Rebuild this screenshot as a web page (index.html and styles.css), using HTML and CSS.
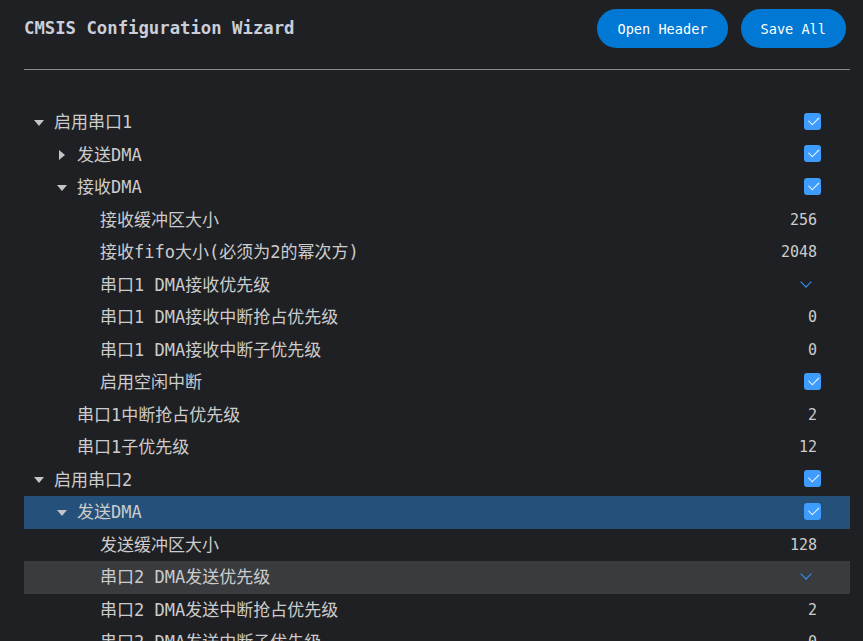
FILE: index.html
```html
<!DOCTYPE html>
<html lang="zh-CN">
<head>
<meta charset="utf-8">
<title>CMSIS Configuration Wizard</title>
<link rel="stylesheet" href="styles.css">
</head>
<body>
<div class="page">
  <header class="header">
    <h1 class="title">CMSIS Configuration Wizard</h1>
    <div class="actions">
      <button class="btn">Open Header</button>
      <button class="btn">Save All</button>
    </div>
  </header>

  <div class="tree">
    <div class="row l0"><span class="twistie open"></span><span class="label">启用串口1</span><span class="ctl"><span class="check"></span></span></div>
    <div class="row l1"><span class="twistie closed"></span><span class="label">发送DMA</span><span class="ctl"><span class="check"></span></span></div>
    <div class="row l1"><span class="twistie open"></span><span class="label">接收DMA</span><span class="ctl"><span class="check"></span></span></div>
    <div class="row l2"><span class="twistie"></span><span class="label">接收缓冲区大小</span><span class="ctl"><span class="val">256</span></span></div>
    <div class="row l2"><span class="twistie"></span><span class="label">接收fifo大小(必须为2的幂次方)</span><span class="ctl"><span class="val">2048</span></span></div>
    <div class="row l2"><span class="twistie"></span><span class="label">串口1 DMA接收优先级</span><span class="ctl"><span class="chev"></span></span></div>
    <div class="row l2"><span class="twistie"></span><span class="label">串口1 DMA接收中断抢占优先级</span><span class="ctl"><span class="val">0</span></span></div>
    <div class="row l2"><span class="twistie"></span><span class="label">串口1 DMA接收中断子优先级</span><span class="ctl"><span class="val">0</span></span></div>
    <div class="row l2"><span class="twistie"></span><span class="label">启用空闲中断</span><span class="ctl"><span class="check"></span></span></div>
    <div class="row l1"><span class="twistie"></span><span class="label">串口1中断抢占优先级</span><span class="ctl"><span class="val">2</span></span></div>
    <div class="row l1"><span class="twistie"></span><span class="label">串口1子优先级</span><span class="ctl"><span class="val">12</span></span></div>
    <div class="row l0"><span class="twistie open"></span><span class="label">启用串口2</span><span class="ctl"><span class="check"></span></span></div>
    <div class="row l1 selected"><span class="twistie open"></span><span class="label">发送DMA</span><span class="ctl"><span class="check"></span></span></div>
    <div class="row l2"><span class="twistie"></span><span class="label">发送缓冲区大小</span><span class="ctl"><span class="val">128</span></span></div>
    <div class="row l2 hover"><span class="twistie"></span><span class="label">串口2 DMA发送优先级</span><span class="ctl"><span class="chev"></span></span></div>
    <div class="row l2"><span class="twistie"></span><span class="label">串口2 DMA发送中断抢占优先级</span><span class="ctl"><span class="val">2</span></span></div>
    <div class="row l2"><span class="twistie"></span><span class="label">串口2 DMA发送中断子优先级</span><span class="ctl"><span class="val">0</span></span></div>
  </div>
</div>
</body>
</html>
```

FILE: styles.css
```css
html, body {
  margin: 0;
  padding: 0;
  background: #1f2023;
  height: 100%;
  overflow: hidden;
}

.page {
  margin: 0 13px 0 24px;
  font-family: "DejaVu Sans Mono", "Noto Sans CJK SC", monospace;
  color: #cccccc;
}

.header {
  display: flex;
  align-items: center;
  justify-content: space-between;
  padding: 9px 4px 21px 0;
  border-bottom: 1px solid #8b8b8b;
}

.title {
  margin: 0;
  font-size: 17.3px;
  font-weight: bold;
  color: #c9ced9;
  line-height: 39px;
}

.actions {
  display: flex;
  gap: 13px;
}

.btn {
  height: 39px;
  padding: 0 20px;
  border: none;
  border-radius: 20px;
  background: #0078d4;
  color: #ffffff;
  font-family: "DejaVu Sans Mono", monospace;
  font-size: 13.6px;
  cursor: pointer;
}

.tree {
  margin-top: 36px;
}

.row {
  display: flex;
  align-items: center;
  height: 32.5px;
  font-size: 17px;
}

.row.l1 { padding-left: 23px; }
.row.l2 { padding-left: 46px; }

.row.selected { background: #25507a; }
.row.hover { background: #393b3f; }

.twistie {
  flex: 0 0 30px;
  height: 32px;
  display: flex;
  align-items: center;
  justify-content: center;
}

.twistie.open::before {
  content: "";
  border-left: 5px solid transparent;
  border-right: 5px solid transparent;
  border-top: 6px solid #c5c5c5;
  margin-top: 1px;
}

.twistie.closed::before {
  content: "";
  border-top: 5px solid transparent;
  border-bottom: 5px solid transparent;
  border-left: 6px solid #c5c5c5;
}

.label {
  flex: 1;
  white-space: nowrap;
  line-height: 32px;
}

.ctl {
  display: flex;
  align-items: center;
  justify-content: flex-end;
  padding-right: 29px;
}

.check {
  width: 17px;
  height: 17px;
  border-radius: 3px;
  background: #3f9cff;
  position: relative;
  margin-top: -2px;
}

.check::after {
  content: "";
  position: absolute;
  left: 4px;
  top: 3px;
  width: 9px;
  height: 5px;
  border-left: 1.5px solid #ffffff;
  border-bottom: 1.5px solid #ffffff;
  transform: rotate(-45deg) translate(0, 1px);
}

.val {
  font-size: 15px;
  padding-right: 4px;
  color: #cccccc;
}

.chev {
  width: 7px;
  height: 7px;
  border-right: 1.5px solid #3794ff;
  border-bottom: 1.5px solid #3794ff;
  transform: rotate(45deg);
  margin: -6px 11px 0 0;
}
```
